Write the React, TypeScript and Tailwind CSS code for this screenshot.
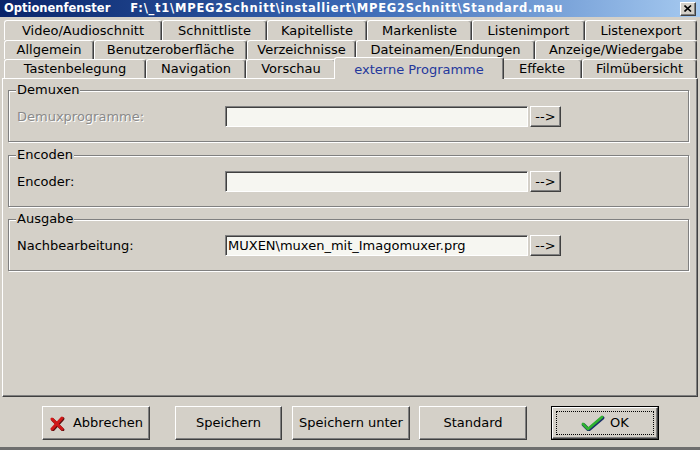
import React from "react";

type T = { label: string; w: string; sel?: boolean };

const row1: T[] = [
  { label: "Video/Audioschnitt", w: "w-[158px]" },
  { label: "Schnittliste", w: "w-[105px]" },
  { label: "Kapitelliste", w: "w-[100px]" },
  { label: "Markenliste", w: "w-[105px]" },
  { label: "Listenimport", w: "w-[113px]" },
  { label: "Listenexport", w: "w-[112px]" },
];
const row2: T[] = [
  { label: "Allgemein", w: "w-[90px]" },
  { label: "Benutzeroberfläche", w: "w-[153px]" },
  { label: "Verzeichnisse", w: "w-[109px]" },
  { label: "Dateinamen/Endungen", w: "w-[179px]" },
  { label: "Anzeige/Wiedergabe", w: "w-[162px]" },
];
const row3: T[] = [
  { label: "Tastenbelegung", w: "w-[142px]" },
  { label: "Navigation", w: "w-[100px]" },
  { label: "Vorschau", w: "w-[90px]" },
  { label: "externe Programme", w: "w-[170px]", sel: true },
  { label: "Effekte", w: "w-[80px]" },
  { label: "Filmübersicht", w: "w-[115px]" },
];

const raised =
  "border border-t-white border-l-white border-r-[#404040] border-b-[#404040] shadow-[inset_-1px_-1px_0_#808080]";
const sunken =
  "border border-t-[#808080] border-l-[#808080] border-r-white border-b-white shadow-[inset_1px_1px_0_#404040]";

function Tab({ t }: { t: T }) {
  if (t.sel) {
    return (
      <div
        className={`${t.w} relative z-10 -mx-[2px] -mt-[2px] h-[22px] shrink-0 flex items-start pt-[2px] justify-center rounded-t-[3px] bg-[#d4d0c8] border-t border-l border-white border-r border-r-[#404040] shadow-[inset_-1px_0_0_#808080] text-[#24389c]`}
      >
        {t.label}
      </div>
    );
  }
  return (
    <div
      className={`${t.w} h-full shrink-0 flex items-center justify-center rounded-t-[3px] bg-[#d4d0c8] border-t border-l border-white border-r border-r-[#404040] shadow-[inset_-1px_0_0_#808080]`}
    >
      {t.label}
    </div>
  );
}

function Row({ label, value, disabled }: { label: string; value?: string; disabled?: boolean }) {
  return (
    <div className="flex items-center pl-[8px] h-[21px]">
      <div
        className={`w-[208px] ${disabled ? "text-[#8a8a8a] [text-shadow:1px_1px_0_#ffffff]" : "text-black"}`}
      >
        {label}
      </div>
      <div className={`w-[303px] h-[21px] bg-[#f6f6f1] ${sunken} flex items-center pl-[2px] whitespace-nowrap overflow-hidden`}>
        {value}
      </div>
      <div className={`ml-[2px] w-[31px] h-[21px] ${raised} flex items-center justify-center text-black`}>
        --&gt;
      </div>
    </div>
  );
}

function Group({ title, mt, children }: { title: string; mt: string; children: React.ReactNode }) {
  return (
    <div
      className={`relative ${mt} ml-[5px] w-[681px] h-[52px] border border-[#808080] shadow-[inset_1px_1px_0_#ffffff,1px_1px_0_#ffffff] pt-[15px]`}
    >
      <span className="absolute -top-[9px] left-[7px] px-[1px] bg-[#d4d0c8] leading-[16px]">{title}</span>
      {children}
    </div>
  );
}

function XIcon() {
  return (
    <svg width="16" height="15" viewBox="0 0 16 15">
      <path d="M3 3 L13 13 M13 2 L3 13" stroke="#5a1010" strokeWidth="3.2" strokeLinecap="round" transform="translate(0.8,0.8)" />
      <path d="M3 3 L13 13 M13 2 L3 13" stroke="#d01818" strokeWidth="3" strokeLinecap="round" />
    </svg>
  );
}

function CheckIcon() {
  return (
    <svg width="24" height="16" viewBox="0 0 24 16">
      <path d="M2 9 L7 14 L21 2" fill="none" stroke="#1a2c6a" strokeWidth="3.6" strokeLinecap="round" strokeLinejoin="round" transform="translate(0.6,0.8)" />
      <path d="M2 9 L7 14 L21 2" fill="none" stroke="#2fb12f" strokeWidth="2.8" strokeLinecap="round" strokeLinejoin="round" />
    </svg>
  );
}

function Btn({ w, ml, children }: { w: string; ml: string; children: React.ReactNode }) {
  return (
    <div className={`${w} ${ml} h-[34px] ${raised} flex items-center justify-center text-black`}>{children}</div>
  );
}

export default function App() {
  return (
    <div className="w-[700px] h-[450px] bg-[#d4d0c8] flex flex-col font-['DejaVu_Sans',sans-serif] text-[13px] text-black overflow-hidden">
      {/* Title bar */}
      <div className="h-[17px] shrink-0 flex items-center bg-gradient-to-r from-[#0a246a] via-[#3a68b4] to-[#a6caf0] text-white font-bold text-[11.5px] pl-[4px] pr-[4px] whitespace-nowrap">
        <span>Optionenfenster</span>
        <span className="ml-[20px] tracking-[0.75px]">F:\_t1\MPEG2Schnitt\installiert\MPEG2Schnitt\Standard.mau</span>
        <div className={`ml-auto w-[16px] h-[14px] bg-[#d4d0c8] ${raised} flex items-center justify-center`}>
          <svg width="8" height="7" viewBox="0 0 8 7">
            <path d="M0.5 0.5 L7 6.5 M7 0.5 L0.5 6.5" stroke="#000" strokeWidth="1.6" />
          </svg>
        </div>
      </div>

      {/* Tabs */}
      <div className="mt-[3px] pl-[4px] flex flex-col">
        <div className="h-[20px] flex">{row1.map((t) => <Tab key={t.label} t={t} />)}</div>
        <div className="h-[19px] flex">{row2.map((t) => <Tab key={t.label} t={t} />)}</div>
        <div className="h-[19px] flex items-start">{row3.map((t) => <Tab key={t.label} t={t} />)}</div>
      </div>

      {/* Panel */}
      <div className="ml-[2px] w-[696px] h-[319px] shrink-0 border border-t-white border-l-white border-r-[#404040] border-b-[#404040] shadow-[inset_-1px_-1px_0_#808080] flex flex-col">
        <Group title="Demuxen" mt="mt-[11px]">
          <Row label="Demuxprogramme:" disabled />
        </Group>
        <Group title="Encoden" mt="mt-[13px]">
          <Row label="Encoder:" />
        </Group>
        <Group title="Ausgabe" mt="mt-[12px]">
          <Row label="Nachbearbeitung:" value="MUXEN\muxen_mit_Imagomuxer.prg" />
        </Group>
      </div>

      {/* Buttons */}
      <div className="mt-[9px] flex">
        <Btn w="w-[108px]" ml="ml-[42px]">
          <span className="flex items-center gap-[8px]">
            <XIcon />
            <span>Abbrechen</span>
          </span>
        </Btn>
        <Btn w="w-[107px]" ml="ml-[25px]">Speichern</Btn>
        <Btn w="w-[118px]" ml="ml-[10px]">Speichern unter</Btn>
        <Btn w="w-[108px]" ml="ml-[9px]">Standard</Btn>
        <div className="ml-[24px] w-[108px] h-[34px] border border-black p-0">
          <div className={`w-full h-full ${raised} p-[3px]`}>
            <div className="w-full h-full border border-dotted border-black flex items-center justify-center gap-[5px]">
              <CheckIcon />
              <span>OK</span>
            </div>
          </div>
        </div>
      </div>

      <div className="mt-auto h-[3px] bg-[#6e6e6e]" />
    </div>
  );
}
